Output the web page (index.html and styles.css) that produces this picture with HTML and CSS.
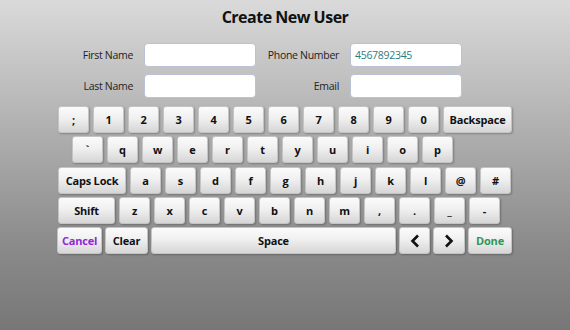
FILE: index.html
```html
<!DOCTYPE html>
<html lang="en">
<head>
    <meta charset="UTF-8">
    <meta name="viewport" content="width=device-width, initial-scale=1.0">
    <title>Create New User</title>
    <link rel="stylesheet" href="styles.css">
</head>
<body>
    <h1 class="title">Create New User</h1>

    <div class="form">
        <label class="lbl">First Name</label>
        <div class="field"></div>
        <label class="lbl">Phone Number</label>
        <div class="field">4567892345</div>
        <label class="lbl">Last Name</label>
        <div class="field"></div>
        <label class="lbl">Email</label>
        <div class="field"></div>
    </div>

    <div class="keyboard">
        <div class="row">
            <div class="key">;</div>
            <div class="key">1</div>
            <div class="key">2</div>
            <div class="key">3</div>
            <div class="key">4</div>
            <div class="key">5</div>
            <div class="key">6</div>
            <div class="key">7</div>
            <div class="key">8</div>
            <div class="key">9</div>
            <div class="key">0</div>
            <div class="key backspace">Backspace</div>
        </div>
        <div class="row row2">
            <div class="key">`</div>
            <div class="key">q</div>
            <div class="key">w</div>
            <div class="key">e</div>
            <div class="key">r</div>
            <div class="key">t</div>
            <div class="key">y</div>
            <div class="key">u</div>
            <div class="key">i</div>
            <div class="key">o</div>
            <div class="key">p</div>
        </div>
        <div class="row">
            <div class="key caps">Caps Lock</div>
            <div class="key">a</div>
            <div class="key">s</div>
            <div class="key">d</div>
            <div class="key">f</div>
            <div class="key">g</div>
            <div class="key">h</div>
            <div class="key">j</div>
            <div class="key">k</div>
            <div class="key">l</div>
            <div class="key">@</div>
            <div class="key">#</div>
        </div>
        <div class="row">
            <div class="key shift">Shift</div>
            <div class="key">z</div>
            <div class="key">x</div>
            <div class="key">c</div>
            <div class="key">v</div>
            <div class="key">b</div>
            <div class="key">n</div>
            <div class="key">m</div>
            <div class="key">,</div>
            <div class="key">.</div>
            <div class="key">_</div>
            <div class="key">-</div>
        </div>
        <div class="row row5">
            <div class="key cancel">Cancel</div>
            <div class="key clear">Clear</div>
            <div class="key space">Space</div>
            <div class="key arrow">
                <svg width="12" height="14" viewBox="0 0 12 14"><polyline points="9,1.5 3.5,7 9,12.5" fill="none" stroke="#111" stroke-width="2.6"/></svg>
            </div>
            <div class="key arrow wide">
                <svg width="12" height="14" viewBox="0 0 12 14"><polyline points="3,1.5 8.5,7 3,12.5" fill="none" stroke="#111" stroke-width="2.6"/></svg>
            </div>
            <div class="key done">Done</div>
        </div>
    </div>
</body>
</html>
```

FILE: styles.css
```css
html{
  font-family: "Open Sans", "Noto Sans", sans-serif;
}

body{
    margin: 0;
    height: 330px;
    overflow: hidden;
    background: linear-gradient(to bottom, #dadada 0%, #b4b4b4 35%, #8a8a8a 75%, #777777 100%);
}

.title{
    margin: 0;
    padding-top: 6px;
    height: 43px;
    box-sizing: border-box;
    text-align: center;
    font-size: 16px;
    font-weight: 700;
    color: #111;
    letter-spacing: -0.5px;
}

.form{
    display: grid;
    grid-template-columns: 76px 112px 72px 112px;
    grid-auto-rows: 24px;
    column-gap: 11px;
    row-gap: 7px;
    margin-left: 57px;
}

.lbl{
    text-align: right;
    font-size: 10.5px;
    line-height: 24px;
    color: #222;
    white-space: nowrap;
    letter-spacing: -0.3px;
}

.field{
    background: #fff;
    border: 1px solid #b9c3d6;
    border-radius: 4px;
    font-size: 10.5px;
    line-height: 22px;
    padding-left: 4px;
    color: #2b7d7b;
    letter-spacing: -0.3px;
}

.keyboard{
    margin-top: 8px;
    margin-left: 58px;
}

.row{
    display: flex;
    gap: 4px;
    margin-bottom: 3.25px;
}

.row2{
    margin-left: 14px;
}

.row5{
    gap: 3px;
    margin-left: -1px;
}

.key{
    width: 31px;
    height: 27px;
    box-sizing: border-box;
    display: flex;
    align-items: center;
    justify-content: center;
    background: linear-gradient(to bottom, #fbfbfb 0%, #f0f0f0 45%, #d6d6d6 100%);
    border: 1px solid #c4c4c4;
    border-radius: 3px;
    box-shadow: 1px 1px 2px rgba(0, 0, 0, 0.25);
    font-size: 11px;
    font-weight: 700;
    color: #111;
    letter-spacing: -0.2px;
}

.backspace{
    width: 69px;
}

.caps{
    width: 68px;
}

.shift{
    width: 57px;
}

.cancel{
    width: 45px;
    color: #9325d8;
}

.clear{
    width: 43px;
}

.space{
    width: 245px;
}

.wide{
    width: 32px;
}

.done{
    width: 44px;
    color: #2f955a;
}
```
